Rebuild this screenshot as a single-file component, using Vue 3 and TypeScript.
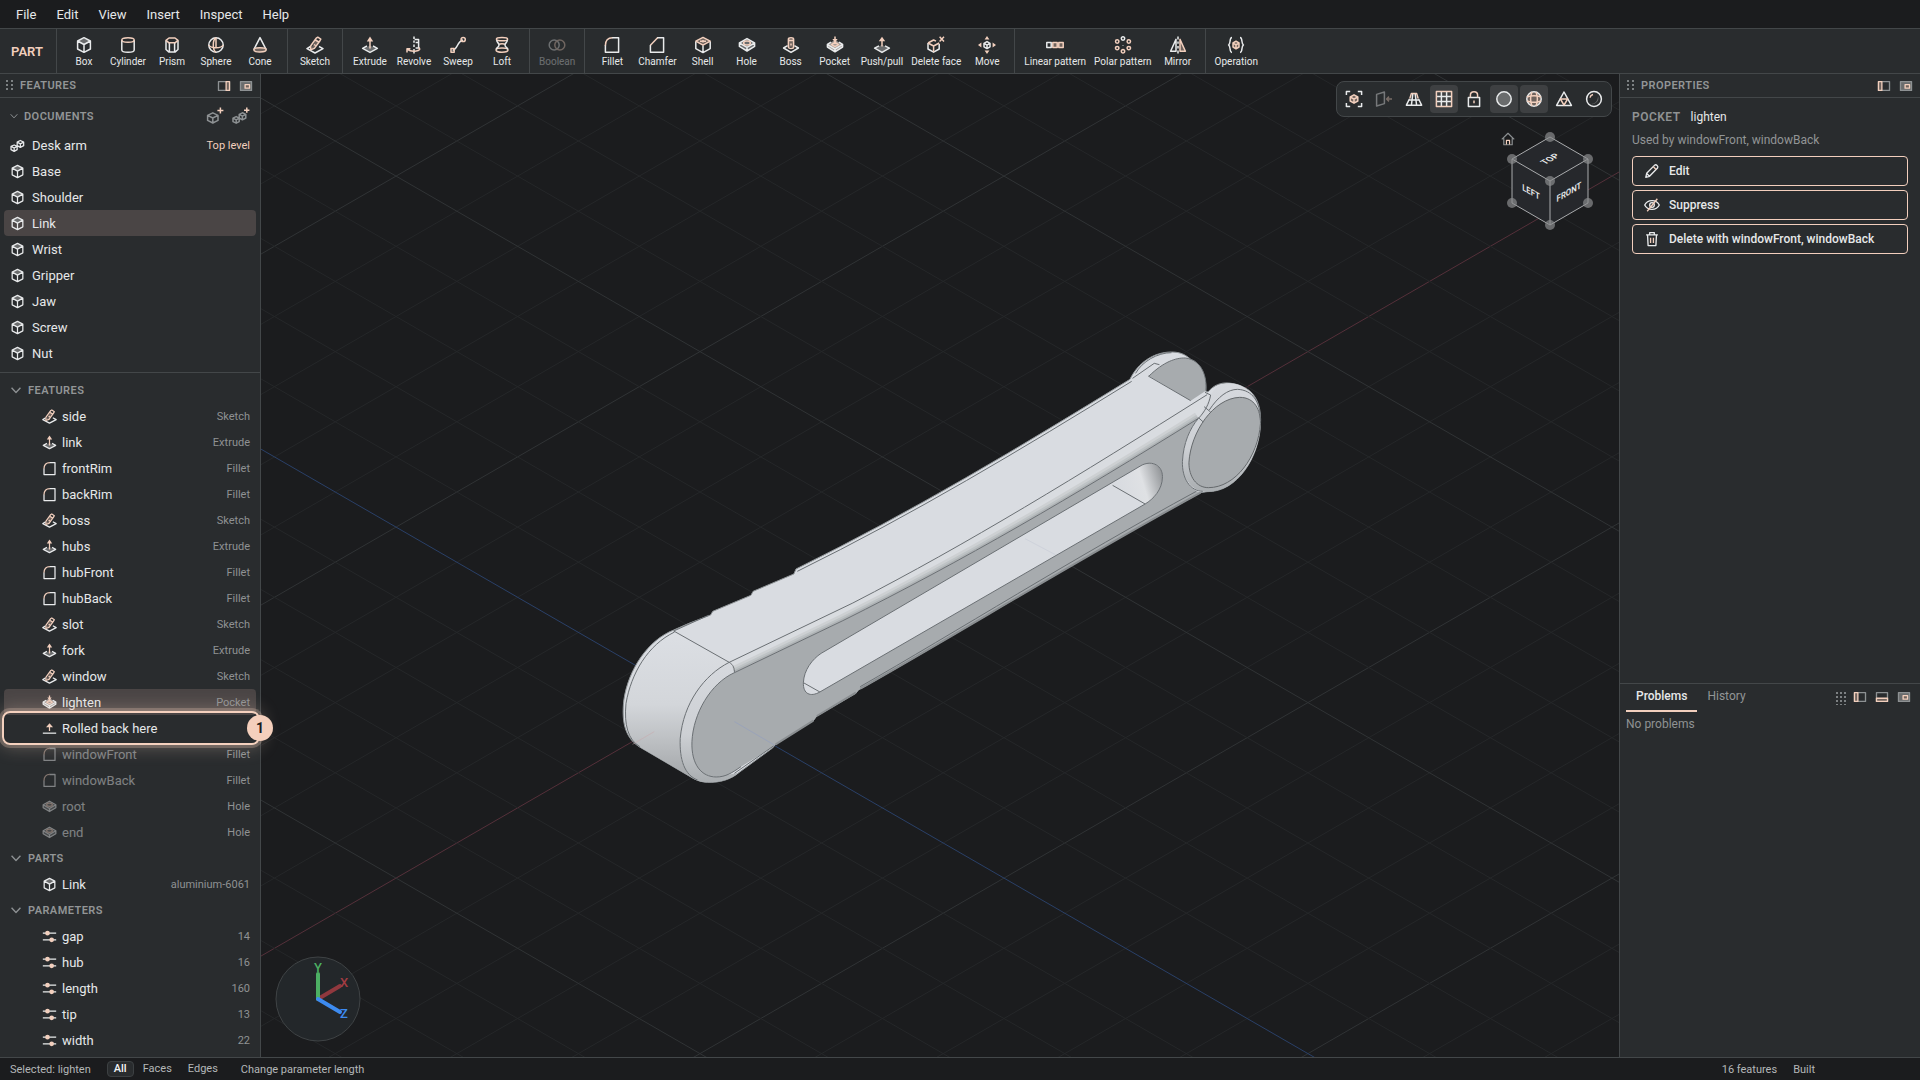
<script setup lang="ts">
import { computed, h, ref } from 'vue'

type Stroke = [kind: string, d: string]

const WHITE = '#e9ebec'
const PEACH = '#f2cfbd'
const GREY = '#8d9193'

const paints: Record<string, Record<string, string>> = {
  w: { stroke: WHITE },
  p: { stroke: PEACH },
  g: { stroke: GREY },
  W: { fill: WHITE, stroke: 'none' },
  P: { fill: PEACH, stroke: 'none' },
  D: { fill: '#6a6c6d', stroke: 'none' },
  B: { fill: '#6f635d', stroke: 'none' },
  L: { fill: '#a39a96', stroke: 'none' },
}

const icons: Record<string, Stroke[]> = {
  box: [['D', 'M9 2 15.5 5.2 9 8.6 2.5 5.2z'], ['w', 'M9 1.7 15.4 5v8L9 16.3 2.6 13V5zM2.6 5 9 8.5 15.4 5M9 8.5v7.8']],
  cylinder: [['w', 'M2.8 4v10c0 3 12.4 3 12.4 0V4'], ['p', 'M2.8 4c0-3 12.4-3 12.4 0s-12.4 3-12.4 0z']],
  prism: [['w', 'M3 4.5v9l3 2.6h6l3-2.6v-9M6.4 6.8v9.2M11.6 6.8v9.2'], ['p', 'M3 4.4 6 2h6l3 2.4-3 2.4H6z']],
  sphere: [['w', 'M9 1.8a7.2 7.2 0 1 1 0 14.4A7.2 7.2 0 1 1 9 1.8z'], ['p', 'M9 1.8C5.4 3.5 5.4 14.5 9 16.2M1.8 9c1.7 3.6 12.7 3.6 14.4 0M9 1.8v9.8']],
  cone: [['w', 'M2.8 13.6 9 1.6l6.2 12'], ['B', 'M2.8 13.8c0-2.6 12.4-2.6 12.4 0s-12.4 3.4-12.4 0z'], ['p', 'M2.8 13.8c0-2.6 12.4-2.6 12.4 0s-12.4 3.4-12.4 0z']],
  sketch: [['w', 'M4.4 10.5 1 12.7 9 17l8-4.3-4-2.2'], ['B', 'M10 3 13 5 8 12 5 13z'], ['p', 'M10.2 2.2l1.6-1 3 2-1 1.8-5.4 7.4-3.8 1.4.2-4zM9.2 3.8l3.4 2.2M8 8.5l1.5 1']],
  extrude: [['D', 'M9 9.5 15 12.5 9 15.5 3 12.5z'], ['w', 'M6 10 1.6 12.4 9 16.4l7.4-4L12 10'], ['p', 'M9 12.6V2.5'], ['P', 'M5.8 5.4 9 .6l3.2 4.8z']],
  revolve: [['w', 'M9 .6v2.4M9 4.6v2.2M9 8.6V11M9 13v4.4M9.6 3.4h4V12h-3M13.6 6.6h-3'], ['p', 'M13.8 11.6c4 3.6-7 5-11.4 1.8M2 16.4v-3.6h3.4']],
  sweep: [['w', 'M3.6 14.4C9.4 13 7.4 5.6 14 4'], ['p', 'M2 12.4h3.2v3.8H2zM14.2 1.4a2.1 2.1 0 1 1 0 4.2 2.1 2.1 0 1 1 0-4.2z']],
  loft: [['p', 'M3.4 3.2c0-2.2 11.2-2.2 11.2 0s-11.2 2.2-11.2 0zM3 14c0-2.8 12-2.8 12 0s-12 3.2-12 0zM6 8.6c1-1.2 5-1.2 6 0'], ['w', 'M3.6 4.2C4 7 6 6.8 6 9s-2 2.2-2.8 4.2M14.4 4.2C14 7 12 6.8 12 9s2 2.2 2.8 4.2']],
  boolean: [['w', 'M6.2 4a5 5 0 1 1 0 10 5 5 0 1 1 0-10z'], ['p', 'M11.8 4a5 5 0 1 1 0 10 5 5 0 1 1 0-10z']],
  fillet: [['w', 'M9 1.8h6.6v14.4H2.4V9'], ['p', 'M2.4 9.4c0-5 2.4-7.6 7-7.6']],
  chamfer: [['w', 'M9 1.8h6.6v14.4H2.4V9'], ['p', 'M2.4 9.2 9.6 1.8']],
  shell: [['B', 'M9 1.4 16.2 5.2 9 9.2 1.8 5.2z'], ['w', 'M1.8 5.4v7.2L9 16.6l7.2-4V5.4M9 9.6v7'], ['p', 'M9 1.4 16.2 5.2 9 9.2 1.8 5.2zM9 4v2.4M6 5.2h6']],
  hole: [['D', 'M9 2.6 16.6 7v3.4L9 15l-7.6-4.6V7z'], ['w', 'M9 2.6 16.6 7v3.4L9 15l-7.6-4.6V7zM1.4 7 9 11.4 16.6 7M9 11.4V15'], ['p', 'M5.6 7c0-2.6 6.8-2.6 6.8 0s-6.8 2.6-6.8 0z']],
  boss: [['w', 'M5.6 9.6 1.6 12 9 16.4l7.4-4.4-4-2.4'], ['B', 'M6.4 3h5.2v8H6.4z'], ['p', 'M6.4 3c0-1.8 5.2-1.8 5.2 0v8c0 2-5.2 2-5.2 0zM6.4 3.2c0 1.8 5.2 1.8 5.2 0M9 7.6v2']],
  pocket: [['L', 'M9 4 16.6 8.4V11L9 15.8 1.4 11V8.4z'], ['w', 'M5 6.2 1.4 8.4v2.6L9 15.8l7.6-4.8V8.4L13 6.2M1.6 8.6 9 13l7.4-4.4M9 13v2.8'], ['p', 'M9 .6V8M5.6 8.6 9 10.6l3.4-2L9 6.4z'], ['P', 'M6.4 3 9 6.4 11.6 3z']],
  pushpull: [['D', 'M9 8.8 16 12.4 9 16.2 2 12.4z'], ['w', 'M6 9.8 1.6 12.2 9 16.4l7.4-4.2L12 9.8'], ['p', 'M9 10.6V3'], ['P', 'M5.8 5.2 9 .8l3.2 4.4z']],
  deleteface: [['w', 'M1 7v6l5.6 3.2 5.6-3.2V8'], ['p', 'M1 7l5.6-3 2.4 1.2M1 7l5.6 3 5.6-3M6.6 10v6M12.6.8l4.4 4.6M17 .8l-4.4 4.6']],
  move: [['w', 'M9 5.6 12 7.4v3.4L9 12.6l-3-1.8V7.4zM6 7.4l3 1.7 3-1.7M9 9.1v3.4'], ['P', 'M9 0l2.4 3.4H6.6zM9 18l2.4-3.4H6.6zM0 9l3.4-2.4v4.8zM18 9l-3.4-2.4v4.8z']],
  linear: [['B', 'M6.8 6.6h4.4v4.8H6.8zM12.8 6.6h4.4v4.8h-4.4z'], ['w', 'M.8 6.6h4.4v4.8H.8z'], ['p', 'M6.8 6.6h4.4v4.8H6.8zM12.8 6.6h4.4v4.8h-4.4z']],
  polar: [['w', 'M9 .8a1.7 1.7 0 1 1 0 3.4A1.7 1.7 0 1 1 9 .8zM9 9v.4'], ['p', 'M3.2 3.8a1.7 1.7 0 1 1 0 3.4 1.7 1.7 0 1 1 0-3.4zM14.8 3.8a1.7 1.7 0 1 1 0 3.4 1.7 1.7 0 1 1 0-3.4zM3.2 10.4a1.7 1.7 0 1 1 0 3.4 1.7 1.7 0 1 1 0-3.4zM14.8 10.4a1.7 1.7 0 1 1 0 3.4 1.7 1.7 0 1 1 0-3.4zM9 13.6a1.7 1.7 0 1 1 0 3.4 1.7 1.7 0 1 1 0-3.4z']],
  mirror: [['B', 'M11 3v12h5.4z'], ['w', 'M7 3.4v11.8H1.6zM9 .4v3M9 5.4v2.4M9 10v2.4M9 14.6v3'], ['p', 'M11 3.4v11.8h5.4z']],
  operation: [['w', 'M5 1.6C2 1.6 4 8 1.6 9 4 10 2 16.4 5 16.4M13 1.6c3 0 1 6.4 3.4 7.4-2.4 1-.4 7.4-3.4 7.4'], ['B', 'M9 5.4 12 7v4l-3 1.8L6 11V7z'], ['p', 'M9 5.2 12 7v4l-3 1.8L6 11V7zM6 7l3 1.8L12 7M9 8.8v4']],
  assembly: [['w', 'M5 8.4 8.6 10v4L5 16l-3.8-2v-4zM1.2 10 5 12l3.6-2M5 12v4M12.4 3 16.4 5v4.2l-4 2-3.8-2V5zM8.6 5l3.8 2 4-2M12.4 7v4.2']],
  addpart: [['g', 'M6.8 5.8 12 8.4v5L6.8 16l-5.2-2.6v-5zM1.6 8.4 6.8 11 12 8.4M6.8 11v5'], ['p', 'M14.4.6v6M11.4 3.6h6']],
  addassembly: [['g', 'M4.2 9.6l3 1.6v3.4l-3 1.6-3.2-1.6v-3.4zM1 11.2l3.2 1.6 3-1.6M4.2 12.8v3.4M10.4 5.8l3.4 1.6V11l-3.4 1.8L7.2 11V7.4zM7.2 7.4l3.2 1.8 3.4-1.8M10.4 9.2v3.6'], ['p', 'M14.8.4v5.4M12 3.2h5.4']],
  rollback: [['w', 'M1 14.6h16'], ['p', 'M9 12V5.4'], ['P', 'M4.8 7.6 9 2.8l4.2 4.8z']],
  param: [['w', 'M1 5h16M1 13h16'], ['P', 'M6.6 2.2a2.8 2.8 0 1 1 0 5.6 2.8 2.8 0 1 1 0-5.6zM11.6 10.2a2.8 2.8 0 1 1 0 5.6 2.8 2.8 0 1 1 0-5.6z']],
  dockright: [['g', 'M2.8 4h12.4v10H2.8z'], ['B', 'M11.4 4h3.8v10h-3.8z'], ['p', 'M11.4 4h3.8v10h-3.8z']],
  dockleft: [['g', 'M2.8 4h12.4v10H2.8z'], ['B', 'M2.8 4h3.8v10H2.8z'], ['p', 'M2.8 4h3.8v10H2.8z']],
  dockbottom: [['g', 'M2.8 4h12.4v10H2.8z'], ['B', 'M2.8 10.4h12.4V14H2.8z'], ['p', 'M2.8 10.4h12.4V14H2.8z']],
  float: [['D', 'M2.8 4h12.4v10H2.8z'], ['g', 'M2.8 4h12.4v10H2.8z'], ['B', 'M8 7.4h5v4H8z'], ['p', 'M8 7.4h5v4H8z']],
  fit: [['w', 'M1.4 5V1.6h3.8M12.8 1.6h3.8V5M16.6 13v3.4h-3.8M5.2 16.4H1.4V13'], ['B', 'M9 4.8 12.8 7v4L9 13.2 5.2 11V7z'], ['p', 'M9 4.8 12.8 7v4L9 13.2 5.2 11V7zM5.2 7 9 9.2 12.8 7M9 9.2v4']],
  section: [['w', 'M1.6 4.4 9.4 2v11.6L1.6 16z'], ['p', 'M17 9h-5M14 6.6 11.6 9l2.4 2.4']],
  perspective: [['w', 'M4.4 9 1.4 15.2h15.2L13.6 9M7.8 4 6.4 15.2M10.2 4l1.4 11.2M3.8 10h10.4'], ['p', 'M4.8 8.6 6.4 3.4h5.2l1.6 5.2']],
  grid: [['w', 'M6.4 2v14M11.6 2v14M2 6.4h14M2 11.6h14'], ['p', 'M1.4 1.4h15.2v15.2H1.4z']],
  lock: [['w', 'M3.4 7.6h11.2v8.8H3.4z'], ['p', 'M5.4 7.4V5.2c0-4.6 7.2-4.6 7.2 0v2.2M9 10.6v2.6']],
  shaded: [['D', 'M9 1.8a7.2 7.2 0 1 1 0 14.4A7.2 7.2 0 1 1 9 1.8z'], ['w', 'M9 1.8a7.2 7.2 0 1 1 0 14.4A7.2 7.2 0 1 1 9 1.8z']],
  globe: [['B', 'M9 1.8a7.2 7.2 0 1 1 0 14.4A7.2 7.2 0 1 1 9 1.8z'], ['w', 'M9 1.8a7.2 7.2 0 1 1 0 14.4A7.2 7.2 0 1 1 9 1.8z'], ['p', 'M7 2C5.4 6 5.4 12 7 16M11 2c1.6 4 1.6 10 0 14M2 7c4-1.4 10-1.4 14 0M2 11c4 1.4 10 1.4 14 0']],
  mesh: [['w', 'M9 2 1.6 15.4h14.8z'], ['p', 'M5.4 9h7.2L9 15.2z']],
  material: [['D', 'M13 6a6 6 0 0 1-7 8c4 0 7-3 7-8z'], ['w', 'M9 1.6a7.4 7.4 0 1 1 0 14.8A7.4 7.4 0 1 1 9 1.6z'], ['p', 'M5 7.6C5.4 5.8 6.4 5 8 4.6']],
  home: [['g', 'M1 9.4 9 1.6l8 7.8M3.6 8v8.4h10.8V8'], ['p', 'M7 16.2v-5.4h4v5.4']],
  edit: [['w', 'M2 16.2 3 11.6 12 2.4c1.6-1.4 4.6 1.4 3.2 3.2L6.2 15zM6.2 15 3 11.8'], ['p', 'M10.4 4l3.4 3.6']],
  hide: [['w', 'M.8 9C4 2.4 14 2.4 17.2 9 14 15.6 4 15.6.8 9zM9 6.4a2.6 2.6 0 1 1 0 5.2 2.6 2.6 0 1 1 0-5.2z'], ['p', 'M3.6 16 15 2']],
  trash: [['w', 'M2.4 4.4h13.2M6.4 4.2V1.8h5.2v2.4M4 4.6l.6 11.8h8.8L14 4.6'], ['p', 'M7.4 7.6v5.8M10.6 7.6v5.8']],
  chevron: [['g', 'M4 6.4 9 11.8l5-5.4']],
}

const Glyph = (props: { name: string; size?: number }) =>
  h(
    'svg',
    {
      width: props.size ?? 18,
      height: props.size ?? 18,
      viewBox: '0 0 18 18',
      fill: 'none',
      'stroke-width': 1.5,
      'stroke-linejoin': 'round',
      'aria-hidden': 'true',
    },
    icons[props.name].map(([kind, d]) => h('path', { d, ...paints[kind] })),
  )
Glyph.props = ['name', 'size']

const menus = ['File', 'Edit', 'View', 'Insert', 'Inspect', 'Help']

const toolGroups: { label: string; icon: string; disabled?: boolean }[][] = [
  [
    { label: 'Box', icon: 'box' },
    { label: 'Cylinder', icon: 'cylinder' },
    { label: 'Prism', icon: 'prism' },
    { label: 'Sphere', icon: 'sphere' },
    { label: 'Cone', icon: 'cone' },
  ],
  [{ label: 'Sketch', icon: 'sketch' }],
  [
    { label: 'Extrude', icon: 'extrude' },
    { label: 'Revolve', icon: 'revolve' },
    { label: 'Sweep', icon: 'sweep' },
    { label: 'Loft', icon: 'loft' },
  ],
  [{ label: 'Boolean', icon: 'boolean', disabled: true }],
  [
    { label: 'Fillet', icon: 'fillet' },
    { label: 'Chamfer', icon: 'chamfer' },
    { label: 'Shell', icon: 'shell' },
    { label: 'Hole', icon: 'hole' },
    { label: 'Boss', icon: 'boss' },
    { label: 'Pocket', icon: 'pocket' },
    { label: 'Push/pull', icon: 'pushpull' },
    { label: 'Delete face', icon: 'deleteface' },
    { label: 'Move', icon: 'move' },
  ],
  [
    { label: 'Linear pattern', icon: 'linear' },
    { label: 'Polar pattern', icon: 'polar' },
    { label: 'Mirror', icon: 'mirror' },
  ],
  [{ label: 'Operation', icon: 'operation' }],
]

const documents = ['Desk arm', 'Base', 'Shoulder', 'Link', 'Wrist', 'Gripper', 'Jaw', 'Screw', 'Nut']
const currentDocument = ref('Link')

const features = [
  { name: 'side', kind: 'Sketch' },
  { name: 'link', kind: 'Extrude' },
  { name: 'frontRim', kind: 'Fillet' },
  { name: 'backRim', kind: 'Fillet' },
  { name: 'boss', kind: 'Sketch' },
  { name: 'hubs', kind: 'Extrude' },
  { name: 'hubFront', kind: 'Fillet' },
  { name: 'hubBack', kind: 'Fillet' },
  { name: 'slot', kind: 'Sketch' },
  { name: 'fork', kind: 'Extrude' },
  { name: 'window', kind: 'Sketch' },
  { name: 'lighten', kind: 'Pocket' },
]
const rolledBack = [
  { name: 'windowFront', kind: 'Fillet' },
  { name: 'windowBack', kind: 'Fillet' },
  { name: 'root', kind: 'Hole' },
  { name: 'end', kind: 'Hole' },
]
const selected = ref('lighten')

const parameters = [
  { name: 'gap', value: 14 },
  { name: 'hub', value: 16 },
  { name: 'length', value: 160 },
  { name: 'tip', value: 13 },
  { name: 'width', value: 22 },
]

const viewTools = [
  { icon: 'fit', label: 'Fit view' },
  { icon: 'section', label: 'Section view', disabled: true },
  { icon: 'perspective', label: 'Perspective' },
  { icon: 'grid', label: 'Grid', on: true },
  { icon: 'lock', label: 'Lock' },
  { icon: 'shaded', label: 'Shaded', on: true },
  { icon: 'globe', label: 'Edges', on: true },
  { icon: 'mesh', label: 'Mesh' },
  { icon: 'material', label: 'Material' },
]

const filters = ['All', 'Faces', 'Edges']
const filter = ref('All')

const tabs = ['Problems', 'History']
const tab = ref('Problems')

// Ground grid: isometric lines through the origin, every fifth one is stronger.
const origin = { x: 439, y: 628.6 }
const step = 70.2
const slope = 0.57735
const span = 1400

const gridLines = computed(() => {
  const lines: { key: string; x1: number; y1: number; x2: number; y2: number; kind: string }[] = []
  for (const dir of [-1, 1]) {
    for (let i = -24; i <= 24; i++) {
      const y = origin.y + i * step
      const kind = i === 0 ? (dir < 0 ? 'axis-x' : 'axis-z') : i % 5 === 0 ? 'major' : 'minor'
      lines.push({
        key: `${dir}:${i}`,
        x1: origin.x - span,
        y1: y - dir * span * slope,
        x2: origin.x + span,
        y2: y + dir * span * slope,
        kind,
      })
    }
  }
  return lines
})

const cubeCorners = [
  [50, 13], [12, 35], [88, 35], [50, 57], [12, 79], [88, 79], [50, 101],
]
</script>

<template>
  <div class="app">
    <nav class="menubar" aria-label="Main menu">
      <button v-for="m in menus" :key="m" type="button">{{ m }}</button>
    </nav>

    <header class="toolbar">
      <strong class="mode">PART</strong>
      <div v-for="(group, i) in toolGroups" :key="i" class="group">
        <button v-for="t in group" :key="t.label" type="button" class="tool" :disabled="t.disabled">
          <Glyph :name="t.icon" />
          <span>{{ t.label }}</span>
        </button>
      </div>
    </header>

    <main class="work">
      <aside class="sidebar">
        <div class="panel-head">
          <span class="grip"></span>
          <h2>FEATURES</h2>
          <button type="button" aria-label="Dock right"><Glyph name="dockright" :size="16" /></button>
          <button type="button" aria-label="Float"><Glyph name="float" :size="16" /></button>
        </div>

        <section class="documents">
          <div class="docs-head">
            <Glyph name="chevron" :size="12" />
            <h3>DOCUMENTS</h3>
            <button type="button" aria-label="New part"><Glyph name="addpart" /></button>
            <button type="button" aria-label="New assembly"><Glyph name="addassembly" /></button>
          </div>
          <ul>
            <li v-for="(d, i) in documents" :key="d">
              <button type="button" class="row doc" :class="{ active: d === currentDocument }" @click="currentDocument = d">
                <Glyph :name="i === 0 ? 'assembly' : 'box'" :size="15" />
                <span class="name">{{ d }}</span>
                <span v-if="i === 0" class="top-level">Top level</span>
              </button>
            </li>
          </ul>
        </section>

        <section class="tree">
          <h3 class="tree-head"><Glyph name="chevron" :size="16" />FEATURES</h3>
          <ul>
            <li v-for="f in features" :key="f.name">
              <button type="button" class="row" :class="{ active: f.name === selected }" @click="selected = f.name">
                <Glyph :name="f.kind.toLowerCase()" :size="15" />
                <span class="name">{{ f.name }}</span>
                <span class="kind">{{ f.kind }}</span>
              </button>
            </li>
            <li class="marker">
              <button type="button" class="row">
                <Glyph name="rollback" :size="15" />
                <span class="name">Rolled back here</span>
              </button>
              <span class="callout"><b>1</b></span>
            </li>
            <li v-for="f in rolledBack" :key="f.name">
              <button type="button" class="row off">
                <Glyph :name="f.kind.toLowerCase()" :size="15" />
                <span class="name">{{ f.name }}</span>
                <span class="kind">{{ f.kind }}</span>
              </button>
            </li>
          </ul>
          <h3 class="tree-head"><Glyph name="chevron" :size="16" />PARTS</h3>
          <ul>
            <li>
              <button type="button" class="row">
                <Glyph name="box" :size="15" />
                <span class="name">Link</span>
                <span class="kind">aluminium-6061</span>
              </button>
            </li>
          </ul>
          <h3 class="tree-head"><Glyph name="chevron" :size="16" />PARAMETERS</h3>
          <ul>
            <li v-for="p in parameters" :key="p.name">
              <button type="button" class="row">
                <Glyph name="param" :size="15" />
                <span class="name">{{ p.name }}</span>
                <span class="kind">{{ p.value }}</span>
              </button>
            </li>
          </ul>
        </section>
      </aside>

      <section class="viewport" aria-label="3D view">
        <svg class="scene" viewBox="0 0 1358 983" preserveAspectRatio="xMidYMid slice">
          <defs>
            <linearGradient id="capShade" x1="0" y1="0" x2="0" y2="1">
              <stop offset="0" stop-color="#dcdfe4" />
              <stop offset=".5" stop-color="#d3d6da" />
              <stop offset=".75" stop-color="#bcbfc2" />
              <stop offset="1" stop-color="#a3a6a9" />
            </linearGradient>
            <linearGradient id="rimShade" x1="0" y1="0" x2="0" y2="1">
              <stop offset="0" stop-color="#d6d9de" />
              <stop offset=".6" stop-color="#cdd0d4" />
              <stop offset="1" stop-color="#a9adb0" />
            </linearGradient>
            <linearGradient id="slotShade" x1="0" y1=".6" x2="1" y2=".35">
              <stop offset=".1" stop-color="#d8dbe0" />
              <stop offset=".6" stop-color="#dfe1e4" />
              <stop offset="1" stop-color="#96999c" />
            </linearGradient>
            <clipPath id="bandClip">
              <path d="M298 997 583 819C850 640 1100 440 1400 194L1408 196 1380 265C1090 500 840 690 560 872L310 1028z" />
            </clipPath>
          </defs>

          <line
            v-for="l in gridLines"
            :key="l.key"
            :x1="l.x1"
            :y1="l.y1"
            :x2="l.x2"
            :y2="l.y2"
            :class="l.kind"
          />

          <g class="model" transform="translate(339 256) scale(.43367 .33333)">
            <path class="body" d="M170 900 205 880 255 855 260 844 348 796 353 784 447 732 452 717C720 545 970 350 1222 148 1240 100 1275 66 1318 66 1340 66 1352 76 1362 88 1388 102 1399 145 1397 184L1402 186C1415 165 1432 157 1450 159 1470 161 1485 170 1498 182 1518 205 1525 240 1523 285 1520 380 1470 487 1400 485L1385 488C1100 690 820 915 596 1080L590 1090 500 1158 492 1172 405 1243 398 1254 320 1328C300 1350 275 1358 248 1357 230 1356 218 1348 208 1340L90 1250C55 1220 50 1170 55 1110 65 1020 110 930 170 900z" />
            <path fill="url(#capShade)" d="M170 903C105 945 68 1030 58 1120 53 1185 65 1230 95 1253L215 1345C190 1320 183 1280 185 1225 192 1120 240 1035 298 997z" />
            <path fill="url(#rimShade)" d="M298 997C240 1035 192 1120 185 1225 183 1290 195 1357 248 1357 280 1356 305 1345 320 1328L268 1341C235 1341 212 1300 212 1235 218 1140 255 1060 310 1028z" />
            <path class="face" d="M310 1028C255 1060 215 1150 212 1235 210 1305 235 1341 268 1341 290 1341 305 1328 325 1310L398 1252 405 1243 492 1172 500 1158 590 1090 596 1080C820 915 1100 690 1385 488 1360 480 1342 440 1343 395 1345 340 1360 295 1380 265 1090 500 840 690 560 872z" />
            <g clip-path="url(#bandClip)">
              <path class="band" d="M298 997 583 819C850 640 1100 440 1400 194L1420 200 1380 265C1090 500 840 690 560 872L310 1028z" />
              <path class="band-shade wide" d="M310 1028 560 872C840 690 1090 500 1380 265" />
              <path class="band-shade mid" d="M310 1028 560 872C840 690 1090 500 1380 265" />
              <path class="band-shade" d="M310 1028 560 872C840 690 1090 500 1380 265" />
            </g>
            <path class="under" d="M405 1243 492 1172M500 1158 590 1088M600 1076C820 915 1100 690 1385 488" />
            <path class="edge" d="M310 1330 400 1248M600 1070C818 908 1092 684 1375 484" />

            <path class="slot" d="M510 970 1250 405C1275 390 1297 408 1297 440 1297 480 1275 508 1257 522L507 1086C485 1102 468 1092 469 1058 470 1020 490 987 510 970z" />
            <path fill="url(#slotShade)" d="M1182 466 1250 405C1275 390 1297 408 1297 440 1297 480 1275 508 1257 522z" />
            <path class="edge" d="M510 970 1250 405C1275 390 1297 408 1297 440 1297 480 1275 508 1257 522L507 1086C485 1102 468 1092 469 1058 470 1020 490 987 510 970zM1182 466 1257 522M469 1058 507 1086" />

            <path class="face" d="M1266 138C1300 95 1328 83 1350 84 1388 90 1400 140 1397 182L1362 212z" />
            <path class="edge" d="M1266 138C1300 95 1328 83 1350 84 1388 90 1400 140 1397 182M1362 212 1264 138M1228 145 1278 100 1290 104M1235 130C1250 95 1285 68 1318 68" />

            <path fill="url(#rimShade)" d="M1405 205C1415 170 1435 158 1455 160 1500 165 1525 215 1523 285 1520 380 1470 487 1400 485 1365 485 1342 445 1343 395 1345 340 1360 295 1380 265z" />
            <path class="face edged" d="M1475 202C1510 202 1523 240 1523 280 1518 380 1465 473 1403 473 1375 473 1358 440 1358 398 1362 305 1415 205 1475 202z" />
            <path class="edge" d="M1405 240C1425 200 1448 178 1470 178 1505 180 1522 215 1523 270M1380 265C1360 295 1345 340 1343 395 1342 445 1360 483 1390 484M1393 230 1408 246M1380 263 1391 276M1395 187 1408 195C1405 220 1395 245 1380 265" />

            <path class="edge" d="M170 903 298 997M298 997C240 1035 192 1120 185 1225 183 1290 195 1335 225 1350M298 997C308 1005 310 1015 310 1028M310 1028C255 1060 215 1150 212 1235 210 1305 235 1341 268 1341 290 1341 305 1328 325 1310" />
            <path class="edge" d="M298 997 583 819C850 640 1100 440 1400 194M310 1028 560 872C840 690 1090 500 1380 265" />
            <path class="edge" d="M172 906C110 945 72 1030 60 1120 55 1185 65 1230 92 1250M170 903 250 856M455 724C722 553 972 358 1226 154" />
            <path class="ghost" d="M310 1175 402 1245" />
            <path class="ghost faint" d="M980 626 1050 674" />
            <path class="ghost red" d="M75 1243 125 1205" />
          </g>
        </svg>

        <div class="view-tools">
          <button
            v-for="v in viewTools"
            :key="v.icon"
            type="button"
            :aria-label="v.label"
            :class="{ on: v.on }"
            :disabled="v.disabled"
          >
            <Glyph :name="v.icon" />
          </button>
        </div>

        <button type="button" class="home" aria-label="Home view"><Glyph name="home" :size="14" /></button>
        <svg class="cube" width="100" height="114" viewBox="0 0 100 114" aria-label="View cube">
          <path class="cube-face" d="M50 13 88 35v44L50 101 12 79V35z" />
          <path class="cube-edge" d="M50 13 88 35v44L50 101 12 79V35zM12 35 50 57 88 35M50 57v44" />
          <circle v-for="([x, y], i) in cubeCorners" :key="i" :cx="x" :cy="y" r="5" />
          <text transform="matrix(.866 -.5 .866 .5 50 35)" y="3">TOP</text>
          <text transform="matrix(.866 .5 0 1 31 68)" y="3">LEFT</text>
          <text transform="matrix(.866 -.5 0 1 69 68)" y="3">FRONT</text>
        </svg>

        <svg class="gizmo" width="86" height="86" viewBox="0 0 86 86" aria-label="Axes">
          <circle cx="43" cy="43" r="42" />
          <path class="gx" d="M43 43 65 30" />
          <path class="gy" d="M43 43V18" />
          <path class="gz" d="M43 43 65 56" />
          <text class="ty" x="43" y="16">Y</text>
          <text class="tx" x="69" y="31">X</text>
          <text class="tz" x="69" y="62">Z</text>
        </svg>
      </section>

      <aside class="inspector">
        <section class="properties">
          <div class="panel-head">
            <span class="grip"></span>
            <h2>PROPERTIES</h2>
            <button type="button" aria-label="Dock left"><Glyph name="dockleft" :size="16" /></button>
            <button type="button" aria-label="Float"><Glyph name="float" :size="16" /></button>
          </div>
          <div class="props-body">
            <p class="title"><b>POCKET</b><span>lighten</span></p>
            <p class="used">Used by windowFront, windowBack</p>
            <button type="button" class="action"><Glyph name="edit" :size="16" />Edit</button>
            <button type="button" class="action"><Glyph name="hide" :size="16" />Suppress</button>
            <button type="button" class="action"><Glyph name="trash" :size="16" />Delete with windowFront, windowBack</button>
          </div>
        </section>
        <section class="problems">
          <div class="tabs" role="tablist">
            <button v-for="t in tabs" :key="t" type="button" role="tab" :aria-selected="t === tab" @click="tab = t">
              {{ t }}
            </button>
            <span class="spacer"></span>
            <span class="grip wide"></span>
            <button type="button" class="ic" aria-label="Dock left"><Glyph name="dockleft" :size="16" /></button>
            <button type="button" class="ic" aria-label="Dock bottom"><Glyph name="dockbottom" :size="16" /></button>
            <button type="button" class="ic" aria-label="Float"><Glyph name="float" :size="16" /></button>
          </div>
          <p>No problems</p>
        </section>
      </aside>
    </main>

    <footer class="status">
      <span class="sel">Selected: lighten</span>
      <button v-for="f in filters" :key="f" type="button" :class="{ on: f === filter }" @click="filter = f">{{ f }}</button>
      <span class="hint">Change parameter length</span>
      <span class="count">16 features</span>
      <span class="built">Built</span>
    </footer>
  </div>
</template>

<style>
body {
  margin: 0;
  background: #1b1c1e;
}
</style>

<style scoped>
.app {
  display: flex;
  flex-direction: column;
  height: 100vh;
  overflow: hidden;
  background: #1b1c1e;
  color: #e6e8e9;
  font-family: Roboto, 'Liberation Sans', sans-serif;
  font-size: 13px;
}

.app * {
  box-sizing: border-box;
}

button {
  padding: 0;
  border: 0;
  background: none;
  color: inherit;
  font: inherit;
}

svg {
  display: block;
  flex: none;
}

ul {
  margin: 0;
  padding: 0;
  list-style: none;
}

h2,
h3,
p {
  margin: 0;
}

h2,
h3 {
  color: #929596;
  font-size: 11px;
  font-weight: 600;
  letter-spacing: 0.04em;
}

.menubar {
  display: flex;
  height: 28px;
  padding-left: 6px;
}

.menubar button {
  padding: 0 10px;
}

.toolbar {
  display: flex;
  height: 46px;
  border-top: 1px solid #434749;
  border-bottom: 1px solid #434749;
  background: #292c2e;
}

.mode {
  display: flex;
  align-items: center;
  justify-content: center;
  width: 57px;
  padding-right: 2px;
  border-right: 1px solid #434749;
  color: #f2cfbd;
  font-size: 13px;
  font-weight: 600;
}

.group {
  display: flex;
  padding: 0 5px;
  border-right: 1px solid #434749;
}

.group:last-child {
  border-right: 0;
}

.tool {
  display: flex;
  flex-direction: column;
  align-items: center;
  justify-content: center;
  min-width: 44px;
  padding: 2px 4px 0;
  gap: 1px;
  font-size: 10px;
  line-height: 14px;
}

.tool:disabled {
  opacity: 0.35;
}

.work {
  display: flex;
  flex: 1;
  min-height: 0;
}

.sidebar {
  position: relative;
  z-index: 2;
  flex: none;
  width: 261px;
  border-right: 1px solid #434749;
  background: #292c2e;
}

.panel-head {
  display: flex;
  align-items: center;
  height: 24px;
  padding: 0 6px;
  border-bottom: 1px solid #434749;
}

.panel-head h2 {
  flex: 1;
  padding-left: 7px;
}

.panel-head button {
  margin-left: 6px;
}

.grip {
  width: 7px;
  height: 11px;
  background: radial-gradient(circle at 1px 1px, #7d8183 1px, transparent 1px) 0 0 / 5px 4px;
}

.grip.wide {
  width: 10px;
  height: 13px;
  background-size: 4px 4px;
}

.documents {
  padding-bottom: 6px;
  border-bottom: 1px solid #434749;
}

.docs-head {
  display: flex;
  align-items: center;
  height: 34px;
  padding: 2px 10px 0 8px;
}

.docs-head h3 {
  flex: 1;
  padding-left: 4px;
}

.docs-head button {
  margin-left: 8px;
}

.row {
  display: flex;
  align-items: center;
  width: 252px;
  height: 26px;
  margin-left: 4px;
  padding: 0 6px 0 38px;
  gap: 5px;
  border-radius: 4px;
  text-align: left;
}

.row.doc {
  padding-left: 6px;
  gap: 7px;
}

.row.active {
  background: #4a4545;
}

.row .name {
  flex: 1;
}

.row.off .name,
.row.off svg {
  opacity: 0.45;
}

.kind {
  color: #8f9293;
  font-size: 11px;
}

.top-level {
  color: #f2cfbd;
  font-size: 11px;
}

.tree {
  padding-top: 4px;
}

.tree-head {
  display: flex;
  align-items: center;
  height: 26px;
  padding-left: 8px;
  gap: 4px;
}

.marker {
  position: relative;
}

.callout {
  position: absolute;
  inset: -4px 0 -4px 2px;
  border: 2px solid #f4d1be;
  border-radius: 8px;
  box-shadow:
    0 0 0 3px rgba(243, 207, 189, 0.25),
    0 0 18px 2px rgba(243, 207, 189, 0.3);
  pointer-events: none;
}

.callout b {
  position: absolute;
  top: 2px;
  right: -15px;
  width: 26px;
  height: 26px;
  border-radius: 13px;
  background: #f4cfbc;
  color: #1b1c1e;
  font-size: 14px;
  line-height: 26px;
  text-align: center;
}

.viewport {
  position: relative;
  flex: 1;
  min-width: 0;
  overflow: hidden;
}

.scene {
  width: 100%;
  height: 100%;
}

.minor {
  stroke: #252729;
}

.major {
  stroke: #303335;
}

.axis-x {
  stroke: #55303a;
}

.axis-z {
  stroke: #2a4068;
}

.model path {
  vector-effect: non-scaling-stroke;
}

.body {
  fill: #d9dce1;
  stroke: #8f9497;
}

.face {
  fill: #a7abae;
}

.face.edged {
  stroke: #65696c;
}

.slot {
  fill: #d9dce1;
}

.band {
  fill: #d9dce0;
}

.band-shade {
  fill: none;
  stroke: #969a9d;
  stroke-width: 4px;
  opacity: 0.4;
}

.band-shade.mid {
  stroke-width: 8px;
  opacity: 0.25;
}

.band-shade.wide {
  stroke-width: 13px;
  opacity: 0.18;
}

.under {
  fill: none;
  stroke: #898d90;
  stroke-width: 2px;
}

.edge {
  fill: none;
  stroke: #6b7074;
}

.ghost {
  fill: none;
  stroke: #8f9dc4;
  opacity: 0.5;
}

.ghost.faint {
  stroke: #c5c9d6;
}

.ghost.red {
  stroke: #c9a9ad;
}

.view-tools {
  position: absolute;
  top: 7px;
  right: 7px;
  display: flex;
  height: 36px;
  padding: 3px;
  gap: 2px;
  border: 1px solid #434749;
  border-radius: 8px;
  background: #292c2e;
}

.view-tools button {
  display: grid;
  place-items: center;
  width: 28px;
  border-radius: 4px;
}

.view-tools .on {
  background: #3e4042;
}

.view-tools button:disabled {
  opacity: 0.4;
}

.home {
  position: absolute;
  top: 58px;
  right: 104px;
}

.cube {
  position: absolute;
  top: 50px;
  right: 19px;
}

.cube-face {
  fill: #26282c;
}

.cube-edge {
  fill: none;
  stroke: #a9abad;
}

.cube circle {
  fill: #8a8b8d;
  fill-opacity: 0.7;
}

.cube text {
  fill: #e6e8e9;
  font-size: 9px;
  font-weight: 600;
  text-anchor: middle;
}

.gizmo {
  position: absolute;
  bottom: 15px;
  left: 14px;
}

.gizmo circle {
  fill: #23272a;
  stroke: #3f4345;
}

.gizmo path {
  fill: none;
  stroke-width: 4px;
  stroke-linecap: round;
}

.gizmo text {
  font-size: 13px;
  font-weight: 500;
  text-anchor: middle;
}

.gx {
  stroke: #90383e;
}

.gy {
  stroke: #4caf63;
}

.gz {
  stroke: #3d8bf0;
}

.tx {
  fill: #a13c42;
}

.ty {
  fill: #4caf63;
}

.tz {
  fill: #3d8bf0;
}

.inspector {
  display: flex;
  flex: none;
  flex-direction: column;
  width: 301px;
  border-left: 1px solid #434749;
  background: #292c2e;
  font-size: 12px;
}

.properties {
  flex: 1;
}

.inspector .panel-head {
  padding-left: 7px;
}

.props-body {
  display: flex;
  flex-direction: column;
  padding: 8px 12px 0;
  gap: 4px;
}

.title {
  display: flex;
  gap: 10px;
  line-height: 22px;
}

.title b {
  color: #8f9293;
  font-weight: 600;
  letter-spacing: 0.04em;
}

.used {
  padding-bottom: 4px;
  color: #929596;
  line-height: 16px;
}

.action {
  display: flex;
  align-items: center;
  height: 30px;
  padding-left: 11px;
  gap: 9px;
  border: 1px solid #f2cfbd;
  border-radius: 4px;
  font-weight: 500;
}

.problems {
  height: 374px;
  padding: 0 6px;
  border-top: 1px solid #434749;
}

.tabs {
  display: flex;
  align-items: center;
  padding-right: 2px;
}

.tabs [role='tab'] {
  height: 28px;
  padding: 0 10px 2px;
  border-bottom: 2px solid transparent;
  color: #929596;
}

.tabs [aria-selected='true'] {
  border-color: #f2cfbd;
  color: #e6e8e9;
  font-weight: 500;
}

.spacer {
  flex: 1;
}

.tabs .ic {
  margin: 0 0 2px 6px;
}

.problems p {
  color: #8f9293;
  line-height: 24px;
}

.status {
  display: flex;
  align-items: center;
  height: 23px;
  padding: 0 105px 0 10px;
  border-top: 1px solid #434749;
  color: #b4b7b8;
  font-size: 11px;
}

.status button {
  height: 16px;
  padding: 0 6px;
  margin-right: 2px;
  border: 1px solid transparent;
  border-radius: 4px;
  line-height: 14px;
}

.status .on {
  border-color: #3c4042;
  background: #292c2e;
  color: #f3f4f5;
  font-weight: 500;
}

.sel {
  margin-right: 16px;
}

.hint {
  flex: 1;
  margin-left: 14px;
}

.built {
  margin-left: 16px;
}
</style>
